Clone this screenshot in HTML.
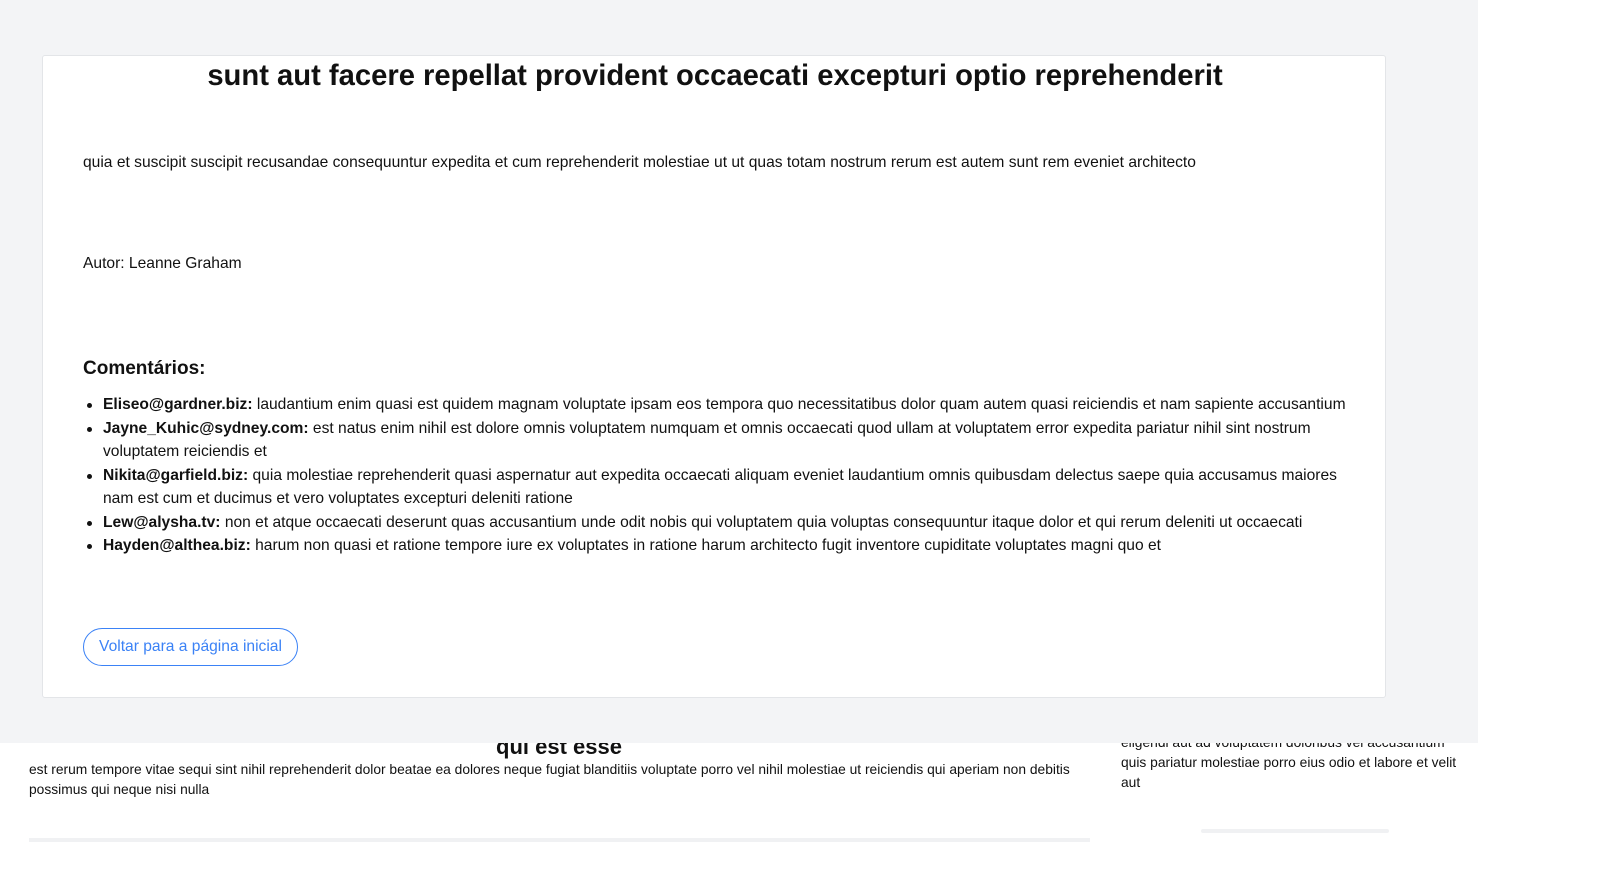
<!DOCTYPE html>
<html><head><meta charset="utf-8"><style>
*{margin:0;padding:0;box-sizing:border-box}
body{width:1603px;height:881px;background:#fff;position:relative;overflow:hidden;font-family:"Liberation Sans",sans-serif;color:#111}
.gray{position:absolute;left:0;top:0;width:1478px;height:743px;background:#f3f4f6;z-index:2}
.card{position:absolute;left:42px;top:55px;width:1344px;height:643px;background:#fff;border:1px solid #e3e5e8;border-radius:3px}
.a{position:absolute;white-space:nowrap}
.t{font-size:15.6px;line-height:23.5px}
h1{position:absolute;left:0;width:1344px;text-align:center;top:2px;font-size:29.2px;font-weight:bold;line-height:36px}
li{list-style:none;position:relative}
.b{position:absolute;left:-16px;top:10px;width:5px;height:5px;border-radius:50%;background:#111}
.btn{position:absolute;left:40px;top:572px;width:215px;height:38px;border:1.5px solid #3b82f6;border-radius:20px;color:#3b82f6;font-size:15.6px;line-height:35px;text-align:center}
.s{font-size:13.8px;line-height:20px}
</style></head><body>
<div class="gray"><div class="card">
<h1>sunt aut facere repellat provident occaecati excepturi optio reprehenderit</h1>
<div class="a t" style="left:40px;top:95px">quia et suscipit suscipit recusandae consequuntur expedita et cum reprehenderit molestiae ut ut quas totam nostrum rerum est autem sunt rem eveniet architecto</div>
<div class="a t" style="left:40px;top:196px">Autor: Leanne Graham</div>
<div class="a" style="left:40px;top:300px;font-size:19px;font-weight:bold;line-height:26px">Comentários:</div>
<ul class="a t" style="left:60px;top:337px">
<li><span class="b"></span><b>Eliseo@gardner.biz:</b> laudantium enim quasi est quidem magnam voluptate ipsam eos tempora quo necessitatibus dolor quam autem quasi reiciendis et nam sapiente accusantium</li>
<li><span class="b"></span><b>Jayne_Kuhic@sydney.com:</b> est natus enim nihil est dolore omnis voluptatem numquam et omnis occaecati quod ullam at voluptatem error expedita pariatur nihil sint nostrum<br>voluptatem reiciendis et</li>
<li><span class="b"></span><b>Nikita@garfield.biz:</b> quia molestiae reprehenderit quasi aspernatur aut expedita occaecati aliquam eveniet laudantium omnis quibusdam delectus saepe quia accusamus maiores<br>nam est cum et ducimus et vero voluptates excepturi deleniti ratione</li>
<li><span class="b"></span><b>Lew@alysha.tv:</b> non et atque occaecati deserunt quas accusantium unde odit nobis qui voluptatem quia voluptas consequuntur itaque dolor et qui rerum deleniti ut occaecati</li>
<li><span class="b"></span><b>Hayden@althea.biz:</b> harum non quasi et ratione tempore iure ex voluptates in ratione harum architecto fugit inventore cupiditate voluptates magni quo et</li>
</ul>
<div class="btn">Voltar para a página inicial</div>
</div></div>
<div class="a" style="left:0;width:1118px;text-align:center;top:732px;font-size:22px;font-weight:bold;line-height:30px">qui est esse</div>
<div class="a s" style="left:29px;top:760px">est rerum tempore vitae sequi sint nihil reprehenderit dolor beatae ea dolores neque fugiat blanditiis voluptate porro vel nihil molestiae ut reiciendis qui aperiam non debitis<br>possimus qui neque nisi nulla</div>
<div class="a" style="left:29px;top:838px;width:1061px;height:4px;background:#f0f1f3"></div>
<div class="a s" style="left:1121px;top:733px">eligendi aut ad voluptatem doloribus vel accusantium<br>quis pariatur molestiae porro eius odio et labore et velit<br>aut</div>
<div class="a" style="left:1201px;top:829px;width:188px;height:4px;background:#f0f1f3;border-radius:2px"></div>
</body></html>
